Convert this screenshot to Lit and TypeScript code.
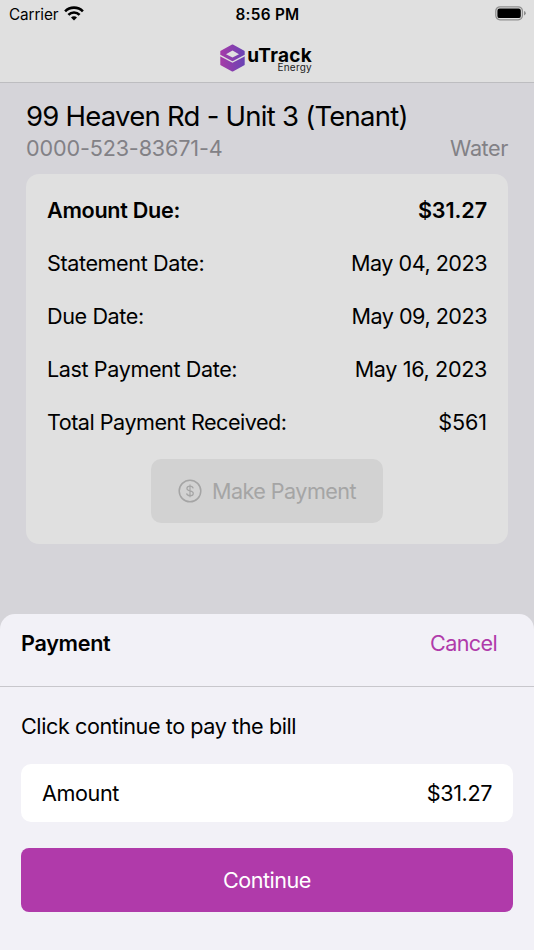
import { LitElement, html, css, svg } from "lit";
import { customElement } from "lit/decorators.js";

const rows = [
  { label: "Amount Due:", value: "$31.27", cls: "strong" },
  { label: "Statement Date:", value: "May 04, 2023", cls: "" },
  { label: "Due Date:", value: "May 09, 2023", cls: "" },
  { label: "Last Payment Date:", value: "May 16, 2023", cls: "last" },
  { label: "Total Payment Received:", value: "$561", cls: "total" },
];

const wifi = svg`<svg class="wifi" width="20" height="15" viewBox="0 0 20 15">
  <g fill="none" stroke="#000" stroke-width="2.6">
    <path d="M1.1 5.3 A12.6 12.6 0 0 1 18.9 5.3"/>
    <path d="M4.4 8.8 A7.8 7.8 0 0 1 15.6 8.8"/>
  </g>
  <path d="M10 14.4 L7 11.4 A4.2 4.2 0 0 1 13 11.4 Z"/>
</svg>`;

const battery = svg`<svg class="battery" width="31" height="15" viewBox="0 0 31 15">
  <rect x=".8" y=".8" width="26.6" height="13" rx="4.2" fill="none" stroke="#8f8f8f" stroke-width="1.3"/>
  <rect x="2.4" y="2.5" width="23.4" height="9.6" rx="2.2"/>
  <path d="M29 5.1 Q30.8 5.7 30.8 7.3 T29 9.5Z" fill="#8b8b8b"/>
</svg>`;

const logo = svg`<svg class="mark" width="25" height="28" viewBox="0 0 25 28">
  <defs><linearGradient id="g" x1="0" y1="0" x2="1" y2="0">
    <stop offset="0" stop-color="#a43ba8"/><stop offset="1" stop-color="#6b43b4"/>
  </linearGradient></defs>
  <path fill="url(#g)" stroke="url(#g)" stroke-width="1.8" stroke-linejoin="round" d="M12.5 1.4 L23.8 7.6 V20.4 L12.5 26.6 L1.2 20.4 V7.6Z"/>
  <path fill="#e0e0e0" d="M12.5 6.6 L19 10.2 L12.5 13.6 L6 10.2Z"/>
  <path fill="none" stroke="#e0e0e0" stroke-width="1.3" d="M0 11.4 L12.5 18.1 L25 11.4"/>
</svg>`;

@customElement("app-root")
export class AppRoot extends LitElement {
  static styles = css`
    :host { display: flex; flex-direction: column; width: 534px; height: 950px; overflow: hidden; box-sizing: border-box;
      background: #d5d4d9; color: #000; font: 400 21.6px/28px Inter, sans-serif; letter-spacing: -0.4px; }
    .top { height: 83px; box-sizing: border-box; background: #e0e0e0; border-bottom: 1px solid #bdbdc0; flex: none; }
    .status { display: grid; grid-template-columns: 1fr auto 1fr; align-items: center; height: 29px; padding: 0 8px 0 9px;
      font-size: 15.3px; letter-spacing: -0.1px; }
    .carrier { display: flex; align-items: center; gap: 6px; }
    .wifi, .battery, .mark, .coin { display: block; flex: none; }
    .wifi { margin-top: -3px; }
    .time { font-weight: 600; letter-spacing: 0.3px; }
    .battery { justify-self: end; margin-top: -3px; }
    .brand { display: flex; justify-content: center; align-items: center; margin: 14px 2px 0 0; height: 30px; gap: 2px; }
    .words { display: flex; flex-direction: column; align-items: flex-end; padding-top: 2px; }
    .name { font-size: 19px; line-height: 17px; font-weight: 700; letter-spacing: 0.3px; margin-right: -0.3px; }
    .sub { font-size: 10px; line-height: 7px; letter-spacing: 0.2px; color: #222; }
    .page { flex: 1; min-height: 0; padding: 15px 26px 0; }
    .title { margin: 0; font-size: 27.5px; line-height: 36px; font-weight: 400; letter-spacing: -0.75px; white-space: nowrap; }
    .meta { display: flex; justify-content: space-between; color: #828186; line-height: 28px; }
    .account { letter-spacing: -0.15px; }
    .card { margin-top: 12px; height: 370px; box-sizing: border-box; padding: 10px 21px 0; background: #e0e0e0; border-radius: 13px; }
    .row { display: flex; justify-content: space-between; align-items: center; height: 52.9px; white-space: nowrap; }
    .row span + span { letter-spacing: -0.5px; }
    .strong { font-weight: 600; letter-spacing: -0.3px; }
    .row.strong span + span, .row.total span + span { letter-spacing: -0.1px; }
    .row.last span + span { letter-spacing: -0.35px; }
    .row.total { letter-spacing: -0.5px; }
    .pay { display: flex; align-items: center; justify-content: center; gap: 10px; width: 232px; height: 64px; margin: 10.5px auto 0;
      background: #d2d2d2; color: #a5a5a5; border-radius: 10px; letter-spacing: -0.55px; }
    .sheet { height: 336px; flex: none; box-sizing: border-box; background: #f2f1f7; border-radius: 15px 15px 0 0; }
    .head { display: flex; justify-content: space-between; height: 73px; box-sizing: border-box; padding: 15px 37px 0 21px; border-bottom: 1px solid #c8c7cc; }
    .cancel { color: #b03aaa; letter-spacing: -0.65px; }
    .body { padding: 25px 21px 0; }
    .hint { letter-spacing: -0.42px; }
    .amount { display: flex; justify-content: space-between; align-items: center; height: 58px; margin-top: 24.4px; padding: 0 21px; background: #fff; border-radius: 10px; }
    .continue { display: flex; justify-content: center; align-items: center; height: 64px; margin-top: 26px; background: #b03aaa; color: #fff; border-radius: 8px; letter-spacing: -0.5px; }
  `;

  render() {
    return html`
      <header class="top">
        <div class="status">
          <div class="carrier"><span>Carrier</span>${wifi}</div>
          <span class="time">8:56 PM</span>
          ${battery}
        </div>
        <div class="brand">${logo}
          <div class="words"><span class="name">uTrack</span><span class="sub">Energy</span></div>
        </div>
      </header>
      <main class="page">
        <h1 class="title">99 Heaven Rd - Unit 3 (Tenant)</h1>
        <div class="meta"><span class="account">0000-523-83671-4</span><span>Water</span></div>
        <section class="card">
          ${rows.map((r) => html`<div class="row ${r.cls}"><span>${r.label}</span><span>${r.value}</span></div>`)}
          <div class="pay">
            <svg class="coin" width="24" height="24" viewBox="0 0 24 24" fill="none" stroke="#a5a5a5">
              <circle cx="12" cy="12" r="10.8" stroke-width="1.5"/>
              <path stroke-width="1.2" d="M12 5.6V18.2 M15.2 9.3C14.9 7.9 13.7 7.2 12 7.2C10.2 7.2 8.9 8.1 8.9 9.5C8.9 10.9 10 11.4 12 11.8C14.2 12.3 15.3 12.9 15.3 14.4C15.3 15.8 13.9 16.7 12 16.7C10.1 16.7 8.8 15.8 8.6 14.4"/>
            </svg>
            <span>Make Payment</span>
          </div>
        </section>
      </main>
      <section class="sheet">
        <div class="head"><span class="strong">Payment</span><span class="cancel">Cancel</span></div>
        <div class="body">
          <div class="hint">Click continue to pay the bill</div>
          <div class="amount"><span>Amount</span><span>$31.27</span></div>
          <div class="continue">Continue</div>
        </div>
      </section>
    `;
  }
}
